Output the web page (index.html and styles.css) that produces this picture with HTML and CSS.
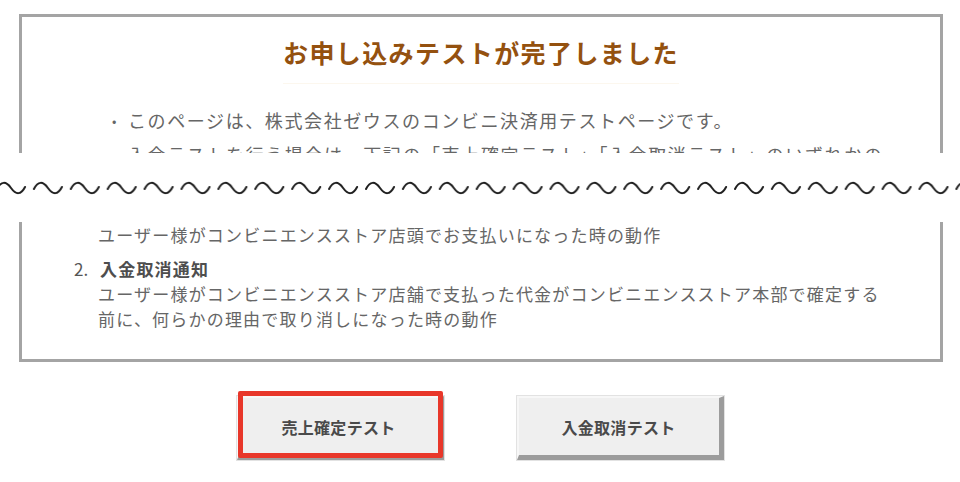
FILE: index.html
```html
<!DOCTYPE html>
<html lang="ja">
<head>
<meta charset="utf-8">
<title>お申し込みテストが完了しました</title>
<link rel="stylesheet" href="styles.css">
</head>
<body>
<div class="page">
  <section class="frag frag-top">
    <div class="box box-top">
      <div class="title-row"><h1 class="title">お申し込みテストが完了しました</h1></div>
      <ul class="notes">
        <li><span class="dot">•</span><span>このページは、株式会社ゼウスのコンビニ決済用テストページです。</span></li>
        <li><span class="dot">•</span><span>入金テストを行う場合は、下記の「売上確定テスト」「入金取消テスト」のいずれかの</span></li>
      </ul>
    </div>
  </section>

  <div class="cut">
    <svg class="wave" width="960" height="16" viewBox="0 0 960 16" aria-hidden="true">
      <defs>
        <pattern id="w" x="-4" y="0" width="36.9" height="16" patternUnits="userSpaceOnUse">
          <path d="M1,8 C5,0 10,0 15,7 C20,14 25,14 29,6" fill="none" stroke="#1e1e1e" stroke-width="2" stroke-linecap="round"/>
        </pattern>
      </defs>
      <rect x="0" y="0" width="960" height="16" fill="url(#w)"/>
    </svg>
  </div>

  <section class="frag frag-bottom">
    <div class="box box-bottom">
      <ol class="events">
        <li class="cont"><span class="num"></span><div class="desc">ユーザー様がコンビニエンスストア店頭でお支払いになった時の動作</div></li>
        <li><span class="num">2.</span><div><div class="ev-title">入金取消通知</div><div class="desc">ユーザー様がコンビニエンスストア店舗で支払った代金がコンビニエンスストア本部で確定する<br>前に、何らかの理由で取り消しになった時の動作</div></div></li>
      </ol>
    </div>
  </section>

  <div class="actions">
    <div class="btn-wrap">
      <button class="btn" type="button">売上確定テスト</button>
      <span class="highlight"></span>
    </div>
    <div class="btn-wrap">
      <button class="btn" type="button">入金取消テスト</button>
    </div>
  </div>
</div>
</body>
</html>
```

FILE: styles.css
```css
html, body {
  margin: 0;
  padding: 0;
  background: #ffffff;
}
body {
  width: 960px;
  height: 482px;
  overflow: hidden;
  font-family: "Noto Sans CJK JP", "Noto Sans", sans-serif;
  color: #666666;
}
.page {
  display: flex;
  flex-direction: column;
}
.frag {
  padding: 0 17px 0 19px;
}
.frag-top {
  padding-top: 14px;
  height: 139px;
  overflow: hidden;
}
.box {
  border: 3px solid #a4a4a4;
  background: #ffffff;
}
.box-top {
  border-bottom: none;
  height: 200px;
}
.box-bottom {
  border-top: none;
  padding-bottom: 28px;
}
.title-row {
  display: flex;
  justify-content: center;
  padding-top: 18px;
}
.title {
  margin: 0;
  font-size: 25px;
  line-height: 34px;
  font-weight: bold;
  letter-spacing: 1.4px;
  color: #94510f;
  padding: 0 0 14px;
  border-bottom: 1px solid #fcf7ee;
}
.notes {
  list-style: none;
  margin: 0;
  padding: 24px 0 0 90px;
  font-size: 18px;
  line-height: 25px;
  letter-spacing: 1.6px;
}
.notes li {
  display: flex;
  margin-bottom: 9px;
  white-space: nowrap;
}
.dot {
  width: 16px;
  flex: none;
  font-size: 13px;
}
.cut {
  height: 69px;
  display: flex;
  flex-direction: column;
}
.wave {
  display: block;
  margin-top: 28px;
}
.events {
  list-style: none;
  margin: 0;
  padding: 0 0 0 52px;
  font-size: 17px;
  line-height: 25px;
  letter-spacing: 1.2px;
}
.events li {
  display: flex;
  white-space: nowrap;
}
.events li + li {
  margin-top: 9px;
}
.num {
  width: 26px;
  flex: none;
  letter-spacing: 0;
  color: #555555;
}
.events li .desc {
  margin-left: -2px;
}
.ev-title {
  font-weight: bold;
  color: #4e4e4e;
}
.actions {
  display: flex;
  justify-content: center;
  gap: 73px;
  margin-top: 34px;
}
.btn-wrap {
  position: relative;
}
.btn {
  display: block;
  width: 207px;
  height: 64px;
  box-sizing: border-box;
  margin: 0;
  padding: 0;
  background: #efefef;
  border-style: solid;
  border-width: 2px 5px 5px 2px;
  border-color: #f7f7f7 #9c9c9c #9c9c9c #f7f7f7;
  box-shadow: 0 0 0 1px #e2e2e2;
  font-family: "Noto Sans CJK JP", "Noto Sans", sans-serif;
  font-size: 16px;
  font-weight: bold;
  letter-spacing: 0.3px;
  color: #4a4a4a;
}
.highlight {
  position: absolute;
  left: 1px;
  top: -5px;
  width: 205px;
  height: 67px;
  box-sizing: border-box;
  border: 5px solid #e8372a;
  border-radius: 2px;
}
```
